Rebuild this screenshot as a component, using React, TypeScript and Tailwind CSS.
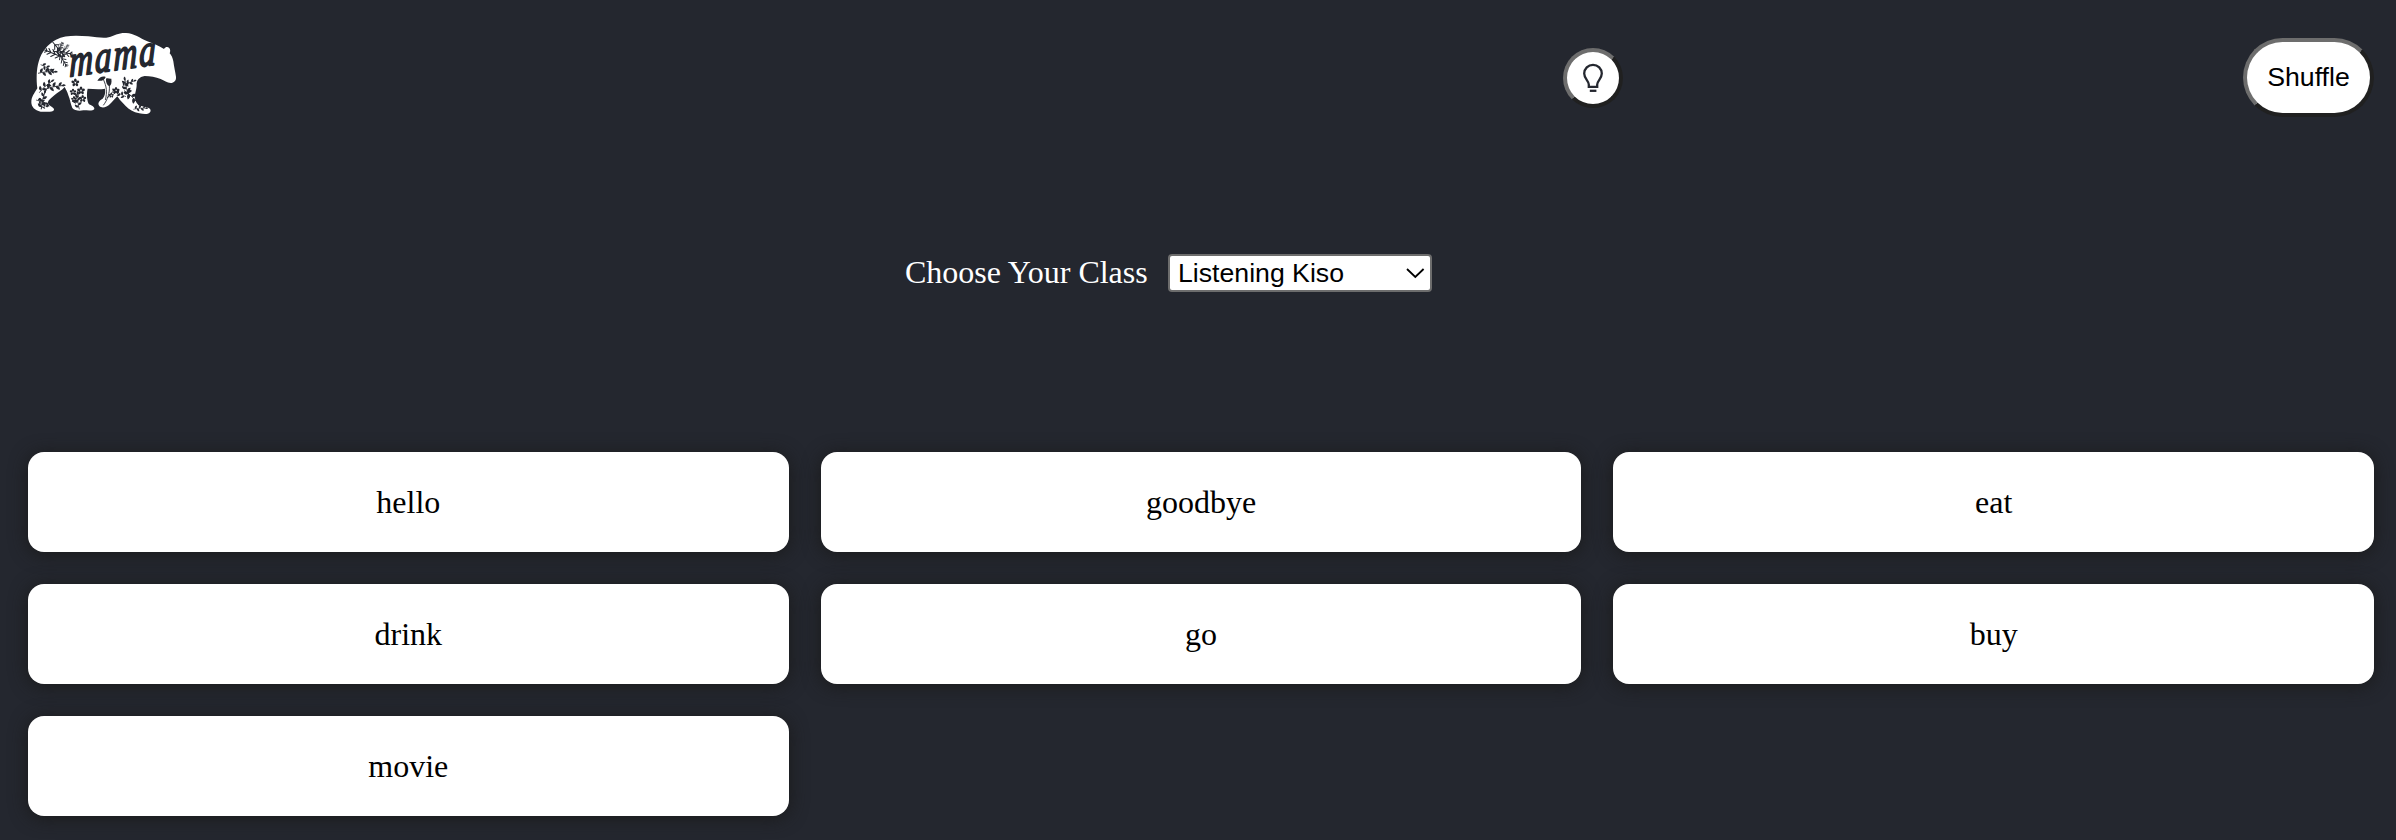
const words = ["hello", "goodbye", "eat", "drink", "go", "buy", "movie"];

const INK = "#24272f";

function Leaf({ x, y, r = 0, s = 1 }: { x: number; y: number; r?: number; s?: number }) {
  return <path d="M0 0C3 -6 9 -7 15 0C9 4 3 4 0 0Z" transform={`translate(${x} ${y}) rotate(${r}) scale(${s})`} fill={INK} />;
}

function Sprig({ x, y, r, s = 1 }: { x: number; y: number; r: number; s?: number }) {
  return (
    <g transform={`translate(${x} ${y}) rotate(${r}) scale(${s})`}>
      <path d="M0 0C15 -3 30 -3 52 0" fill="none" stroke={INK} strokeWidth="2.4" />
      <Leaf x={8} y={-1} r={-60} />
      <Leaf x={14} y={-2} r={55} />
      <Leaf x={24} y={-2} r={-55} />
      <Leaf x={31} y={-2} r={50} />
      <Leaf x={40} y={-1} r={-40} s={0.9} />
      <Leaf x={48} y={0} r={5} s={0.8} />
    </g>
  );
}

function Twig({ x, y, r, s = 1 }: { x: number; y: number; r: number; s?: number }) {
  return (
    <g transform={`translate(${x} ${y}) rotate(${r}) scale(${s})`} fill="none" stroke={INK} strokeWidth="3.2" strokeLinecap="round">
      <path d="M0 0L58 0M10 0L20 -10M10 0L22 10M24 0L34 -11M24 0L36 11M38 0L47 -9M38 0L48 9M50 0L56 -6M50 0L56 6" />
    </g>
  );
}

function Flower({ x, y, s = 1 }: { x: number; y: number; s?: number }) {
  return (
    <g transform={`translate(${x} ${y}) scale(${s})`} fill={INK}>
      {[0, 72, 144, 216, 288].map((a) => (
        <ellipse key={a} cx="0" cy="-6.5" rx="3.6" ry="4.6" transform={`rotate(${a})`} />
      ))}
    </g>
  );
}

function Logo() {
  return (
    <svg className="h-[110px] w-[170px] shrink-0" viewBox="0 0 510 330" role="img" aria-label="mama bear">
      <path
        fill="#fff"
        d="M52 205C49 178 49 148 56 125C64 96 83 72 108 59C135 45 170 47 205 49C230 51 248 56 266 52C283 47 296 38 318 39C343 40 359 54 382 64C400 71 417 78 432 87C436 81 442 80 447 83C452 88 451 94 449 100C454 105 458 113 460 124C462 140 466 156 468 170C469 182 462 188 452 189C441 189 433 182 422 177C407 171 391 168 374 168C358 170 349 181 350 195C350 210 343 222 345 235C347 250 356 258 373 260C388 262 394 267 391 275C387 284 372 282 358 280C340 277 327 268 317 258L300 240L292 229C284 236 277 246 270 252C260 262 246 266 238 258C232 250 237 242 248 236C254 228 257 220 255 206C238 209 220 207 203 206C199 222 201 242 207 253C216 257 224 261 223 267C219 274 203 271 190 271C176 274 163 271 157 264C151 252 151 239 145 226C142 215 138 209 134 201C127 211 112 217 103 226C94 235 83 241 84 249C87 260 104 262 102 270C97 278 79 275 62 275C44 272 34 260 34 247C34 230 43 220 52 205Z"
      />
      <Twig x={128} y={112} r={-158} />
      <Twig x={112} y={98} r={-62} s={0.6} />
      <Twig x={98} y={66} r={50} s={0.95} />
      <Twig x={100} y={94} r={8} />
      <Twig x={128} y={94} r={-48} s={0.45} />
      <Twig x={116} y={100} r={58} s={0.8} />
      <Sprig x={54} y={160} r={-5} />
      <Sprig x={62} y={134} r={32} s={0.8} />
      <Sprig x={58} y={218} r={-42} />
      <Sprig x={76} y={208} r={-12} s={1.05} />
      <Sprig x={64} y={268} r={-78} s={1} />
      <Sprig x={48} y={240} r={25} s={0.75} />
      <Sprig x={62} y={266} r={-25} s={0.55} />
      <Flower x={166} y={188} s={1.1} />
      <Flower x={183} y={212} s={1.1} />
      <Flower x={159} y={216} s={0.9} />
      <Flower x={188} y={236} />
      <Flower x={162} y={238} s={0.8} />
      <Sprig x={178} y={268} r={-95} s={0.9} />
      <Sprig x={166} y={254} r={-80} s={0.7} />
      <path d="M258 176C264 172 268 178 274 176C276 188 273 196 268 199C261 195 257 188 258 176ZM232 182C238 172 248 167 257 171C254 181 244 184 232 182Z" fill={INK} />
      <path d="M268 196C270 220 262 240 250 256M250 178C260 200 262 216 256 240M262 234L288 204" fill="none" stroke={INK} strokeWidth="2.6" />
      <Flower x={288} y={212} />
      <Flower x={274} y={226} s={0.7} />
      <Sprig x={328} y={228} r={-105} />
      <Sprig x={318} y={230} r={-150} s={0.8} />
      <Sprig x={312} y={212} r={42} s={1.15} />
      <Sprig x={306} y={200} r={-25} s={0.8} />
      <Sprig x={340} y={268} r={-5} s={0.75} />
      <text
        transform="translate(148 170) rotate(-8) skewX(-8) scale(1 1.35)"
        fill={INK}
        stroke={INK}
        strokeWidth="4"
        strokeLinejoin="round"
        textLength="262"
        className="font-['Liberation_Serif',serif] text-[100px] italic"
      >
        mama
      </text>
    </svg>
  );
}

function Bulb() {
  return (
    <svg className="h-10 w-9" viewBox="0 0 36 40" fill="none" stroke={INK} strokeWidth="2.3">
      <path d="M13.8 28.9V26.6C13.8 22.6 9.2 20.7 9.2 15.6A8.8 8.8 0 0 1 26.8 15.6C26.8 20.7 22.2 22.6 22.2 26.6V28.9Z" />
      <path d="M14.8 32.8H21.4" />
    </svg>
  );
}

export default function App() {
  return (
    <div className="flex h-[840px] w-full flex-col overflow-hidden bg-[#24272f] font-['Liberation_Serif',serif] text-[32px] leading-9">
      <header className="flex h-[154px] items-start pt-5 pr-[22px] pl-5">
        <Logo />
        <button className="mt-7 ml-[1373px] flex size-[60px] items-center justify-center rounded-full border-4 border-t-[#6d6d6d] border-r-[#202020] border-b-[#202020] border-l-[#6d6d6d] bg-white" aria-label="Hint">
          <Bulb />
        </button>
        <button className="mt-[18px] ml-auto h-[79px] w-[131px] rounded-[40px] border-4 border-t-[#6d6d6d] border-r-[#202020] border-b-[#202020] border-l-[#6d6d6d] bg-white pb-0.5 font-['Liberation_Sans',sans-serif] text-[26.67px] text-black">
          Shuffle
        </button>
      </header>
      <section className="flex h-[298px] items-start pt-[100px] pl-[905px] text-white">
        <span className="w-[263px] whitespace-nowrap">Choose Your Class</span>
        <button className="flex h-[38px] w-[264px] items-center justify-between rounded-[4px] border-2 border-[#6d6d6d] bg-white pr-[5px] pl-2 font-['Liberation_Sans',sans-serif] text-[26.67px] text-black">
          <span>Listening Kiso</span>
          <svg className="h-3 w-5" viewBox="0 0 20 12" fill="none" stroke="#000" strokeWidth="1.8">
            <path d="M2 2L10.3 10L18.6 2" />
          </svg>
        </button>
      </section>
      <main className="grid grid-cols-3 gap-8 pr-[22px] pl-7">
        {words.map((word) => (
          <div key={word} className="flex h-[100px] items-center justify-center rounded-2xl bg-white text-black shadow-[0_2px_18px_#1a1a1a]">
            {word}
          </div>
        ))}
      </main>
    </div>
  );
}
